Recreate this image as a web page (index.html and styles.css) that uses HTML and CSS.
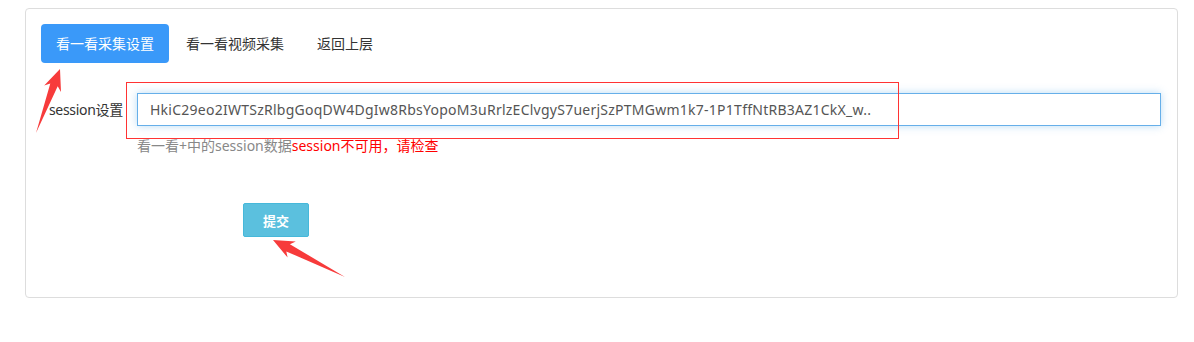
FILE: index.html
```html
<!DOCTYPE html>
<html lang="zh-CN">
<head>
    <meta charset="UTF-8">
    <title>看一看采集设置</title>
    <link rel="stylesheet" href="styles.css">
</head>
<body>
    <div class="page">
        <!-- Settings Panel -->
        <div class="panel">
            <div class="tabs">
                <a class="tab active">看一看采集设置</a>
                <a class="tab">看一看视频采集</a>
                <a class="tab">返回上层</a>
            </div>

            <div class="form-row">
                <label class="form-label">session设置</label>
                <div class="form-field">
                    <input class="form-input" type="text" value="HkiC29eo2IWTSzRlbgGoqDW4DgIw8RbsYopoM3uRrlzEClvgyS7uerjSzPTMGwm1k7-1P1TffNtRB3AZ1CkX_w..">
                    <div class="help">看一看+中的session数据<span class="help-error">session不可用，请检查</span></div>
                </div>
            </div>

            <div class="form-actions">
                <button class="btn-submit">提交</button>
            </div>
        </div>

        <!-- Annotations -->
        <div class="mark-box"></div>
        <svg class="marks" width="1194" height="342" viewBox="0 0 1194 342">
            <polygon points="36,133 50.3,83.5 44.2,85.5 60,69 61,91.9 57.7,86.3" fill="#f73b3b"/>
            <polygon points="345,277 289.9,244.2 295.8,241.6 273,240 287.6,257.6 286.3,251.4" fill="#f73b3b"/>
        </svg>
    </div>
</body>
</html>
```

FILE: styles.css
```css
body, html {
    margin: 0;
    padding: 0;
    background: #fff;
    font-family: "Noto Sans", "Noto Sans CJK SC", sans-serif;
    color: #333;
}

.page {
    position: relative;
    width: 1194px;
    height: 342px;
    padding-top: 8px;
    box-sizing: border-box;
}

.panel {
    margin-left: 25px;
    width: 1153px;
    height: 290px;
    box-sizing: border-box;
    border: 1px solid #ddd;
    border-radius: 4px;
    padding: 15px 15px 0 15px;
}

.tabs {
    display: flex;
    align-items: center;
    height: 39px;
}

.tab {
    font-size: 14px;
    color: #333;
    padding: 0 16px 0 17px;
    line-height: 39px;
}

.tab.active {
    width: 128px;
    box-sizing: border-box;
    padding: 0;
    text-align: center;
    background-color: #3a99f9;
    color: #fff;
    border-radius: 4px;
}

.form-row {
    display: flex;
    margin-top: 30px;
    margin-left: -15px;
}

.form-label {
    width: 111px;
    box-sizing: border-box;
    text-align: right;
    padding-right: 14px;
    font-size: 14px;
    line-height: 33px;
    letter-spacing: -0.3px;
}

.form-field {
    flex: 1;
}

.form-input {
    display: block;
    width: 1024px;
    height: 33px;
    box-sizing: border-box;
    border: 1px solid #66afe9;
    outline: none;
    padding: 0 12px;
    font-family: "Noto Sans", sans-serif;
    font-size: 14px;
    letter-spacing: 0.25px;
    color: #555;
    box-shadow: 0 0 8px rgba(102, 175, 233, 0.45);
}

.help {
    margin-top: 10px;
    font-size: 14px;
    line-height: 19px;
    color: #888;
}

.help-error {
    color: #f00;
}

.form-actions {
    margin-top: 48px;
    padding-left: 202px;
}

.btn-submit {
    width: 66px;
    height: 34px;
    background-color: #5bc0de;
    border: 1px solid #46b8da;
    border-radius: 2px;
    color: #fff;
    font-size: 13px;
    font-weight: bold;
    font-family: "Noto Sans CJK SC", sans-serif;
}

.mark-box {
    position: absolute;
    left: 126px;
    top: 82px;
    width: 771px;
    height: 55px;
    border: 1px solid #f33;
}

.marks {
    position: absolute;
    left: 0;
    top: 0;
}
```
